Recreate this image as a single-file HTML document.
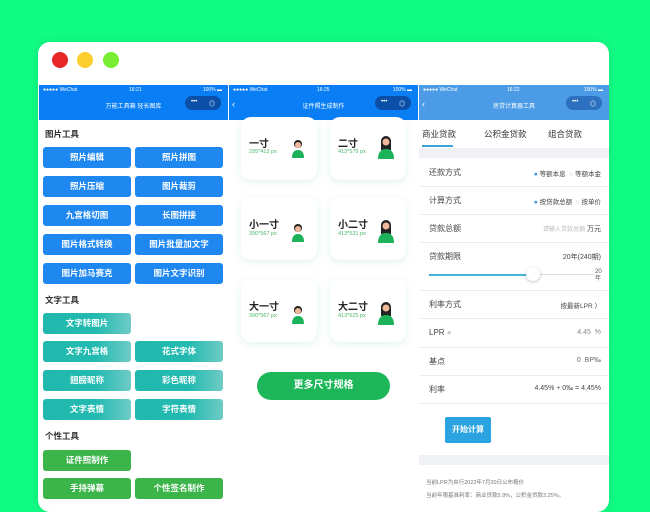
<!DOCTYPE html>
<html><head><meta charset="utf-8"><style>
*{margin:0;padding:0;box-sizing:border-box}
body{width:650px;height:500px;background:#10fb84;position:relative;overflow:hidden;font-family:"Liberation Sans","Noto Sans CJK SC",sans-serif}
.win{position:absolute;left:38px;top:42px;width:571px;height:470px;background:#fff;border-radius:12px;overflow:hidden;box-shadow:0 0 8px rgba(0,0,0,.1)}
.dot{position:absolute;top:52px;width:16px;height:16px;border-radius:50%}
.p{position:absolute;top:85px;width:189px;height:415px;background:#fff;overflow:hidden}
.hd{position:absolute;left:0;top:0;width:100%;height:35px;background:#0a7ef5;color:#fff}
.sb{position:absolute;top:2px;font-size:5px}
.tt{position:absolute;top:16px;width:100%;text-align:center;font-size:6px}
.cap{position:absolute;right:7px;top:11px;width:36px;height:14px;border-radius:7px;background:#0b4fa8;font-size:6px;color:#fff}
.a{position:absolute}
.b{position:absolute;width:88px;height:21px;border-radius:3px;color:#fff;font-size:8.5px;font-weight:bold;text-align:center;line-height:21px}
.bl{background:#1e87f0}
.te{background:linear-gradient(90deg,#21b9ae,#22bab0 60%,#6fcbc6)}
.gr{background:#3bb44a}
.sec{position:absolute;left:6px;font-size:8.5px;font-weight:bold;color:#333}
.card{position:absolute;width:76px;height:63px;background:#fff;border-radius:10px;box-shadow:0 2px 8px rgba(40,180,120,.15)}
.card .n{position:absolute;left:8px;top:19px;font-size:10px;font-weight:bold;color:#222}
.card .s{position:absolute;left:8px;top:34px;font-size:5.5px;color:#4cb86a}
.lab{position:absolute;left:10px;font-size:8px;color:#444}
.val{position:absolute;right:8px;font-size:7px;color:#444}
.ln{position:absolute;left:0;width:100%;height:1px;background:#eee}
</style></head><body>
<div class="win"></div>
<div class="dot" style="left:52px;background:#e8262a"></div>
<div class="dot" style="left:77px;background:#fdcf2e"></div>
<div class="dot" style="left:103px;background:#77ee32"></div>

<!-- panel 1 -->
<div class="p" style="left:39px">
 <div class="hd"><span class="sb" style="left:4px">●●●●● WeChat</span><span class="sb" style="left:90px">16:21</span><span class="sb" style="right:6px">100% ▬</span>
 <div class="tt">万能工具箱 轻长图库</div><div class="cap"><span class="a" style="left:6px;top:3px">•••</span><span class="a" style="left:24px;top:3px">◎</span></div></div>
 <div class="sec" style="top:43px">图片工具</div>
 <div class="b bl" style="left:4px;top:62px">照片编辑</div><div class="b bl" style="left:96px;top:62px">照片拼图</div>
 <div class="b bl" style="left:4px;top:91px">照片压缩</div><div class="b bl" style="left:96px;top:91px">图片裁剪</div>
 <div class="b bl" style="left:4px;top:120px">九宫格切图</div><div class="b bl" style="left:96px;top:120px">长图拼接</div>
 <div class="b bl" style="left:4px;top:149px">图片格式转换</div><div class="b bl" style="left:96px;top:149px">图片批量加文字</div>
 <div class="b bl" style="left:4px;top:178px">图片加马赛克</div><div class="b bl" style="left:96px;top:178px">图片文字识别</div>
 <div class="sec" style="top:209px">文字工具</div>
 <div class="b te" style="left:4px;top:228px">文字转图片</div>
 <div class="b te" style="left:4px;top:256px">文字九宫格</div><div class="b te" style="left:96px;top:256px">花式字体</div>
 <div class="b te" style="left:4px;top:285px">翅膀昵称</div><div class="b te" style="left:96px;top:285px">彩色昵称</div>
 <div class="b te" style="left:4px;top:314px">文字表情</div><div class="b te" style="left:96px;top:314px">字符表情</div>
 <div class="sec" style="top:345px">个性工具</div>
 <div class="b gr" style="left:4px;top:365px">证件照制作</div>
 <div class="b gr" style="left:4px;top:393px">手持弹幕</div><div class="b gr" style="left:96px;top:393px">个性签名制作</div>
</div>

<!-- panel 2 -->
<div class="p" style="left:229px">
 <div class="hd"><span class="sb" style="left:4px">●●●●● WeChat</span><span class="sb" style="left:88px">16:25</span><span class="sb" style="right:6px">100% ▬</span>
 <span class="a" style="left:3px;top:14px;font-size:9px">‹</span>
 <div class="tt">证件照生成制作</div><div class="cap"><span class="a" style="left:6px;top:3px">•••</span><span class="a" style="left:24px;top:3px">◎</span></div></div>
 <div class="card" style="left:12px;top:32px;height:63px"><div class="n" style="top:18px">一寸</div><div class="s" style="top:32px">295*413 px</div></div>
 <div class="card" style="left:101px;top:32px;height:63px"><div class="n" style="top:18px">二寸</div><div class="s" style="top:32px">413*579 px</div></div>
 <div class="card" style="left:12px;top:112px"><div class="n">小一寸</div><div class="s">390*567 px</div></div>
 <div class="card" style="left:101px;top:112px"><div class="n">小二寸</div><div class="s">413*531 px</div></div>
 <div class="card" style="left:12px;top:194px"><div class="n">大一寸</div><div class="s">390*567 px</div></div>
 <div class="card" style="left:101px;top:194px"><div class="n">大二寸</div><div class="s">413*625 px</div></div>
 <svg class="a" style="left:62px;top:53px" width="14" height="20"><circle cx="7" cy="6" r="4" fill="#222"/><circle cx="7" cy="7" r="3" fill="#f1b89a"/><path d="M1 20 Q1 12 7 12 Q13 12 13 20Z" fill="#1cb25a"/></svg>
 <svg class="a" style="left:148px;top:48px" width="18" height="26"><circle cx="9" cy="8" r="5" fill="#222"/><rect x="4" y="8" width="10" height="9" fill="#222"/><circle cx="9" cy="9" r="3.5" fill="#f1b89a"/><path d="M1 26 Q1 16 9 16 Q17 16 17 26Z" fill="#1cb25a"/></svg>
 <svg class="a" style="left:62px;top:137px" width="14" height="20"><circle cx="7" cy="6" r="4" fill="#222"/><circle cx="7" cy="7" r="3" fill="#f1b89a"/><path d="M1 20 Q1 12 7 12 Q13 12 13 20Z" fill="#1cb25a"/></svg>
 <svg class="a" style="left:148px;top:132px" width="18" height="26"><circle cx="9" cy="8" r="5" fill="#222"/><rect x="4" y="8" width="10" height="9" fill="#222"/><circle cx="9" cy="9" r="3.5" fill="#f1b89a"/><path d="M1 26 Q1 16 9 16 Q17 16 17 26Z" fill="#1cb25a"/></svg>
 <svg class="a" style="left:62px;top:219px" width="14" height="20"><circle cx="7" cy="6" r="4" fill="#222"/><circle cx="7" cy="7" r="3" fill="#f1b89a"/><path d="M1 20 Q1 12 7 12 Q13 12 13 20Z" fill="#1cb25a"/></svg>
 <svg class="a" style="left:148px;top:214px" width="18" height="26"><circle cx="9" cy="8" r="5" fill="#222"/><rect x="4" y="8" width="10" height="9" fill="#222"/><circle cx="9" cy="9" r="3.5" fill="#f1b89a"/><path d="M1 26 Q1 16 9 16 Q17 16 17 26Z" fill="#1cb25a"/></svg>
 <div class="a" style="left:28px;top:287px;width:133px;height:28px;border-radius:14px;background:#1db75a;color:#fff;font-size:10px;font-weight:bold;text-align:center;line-height:28px">更多尺寸规格</div>
</div>

<!-- panel 3 -->
<div class="p" style="left:419px;width:190px">
 <div class="hd" style="background:#4c9be6"><span class="sb" style="left:4px">●●●●● WeChat</span><span class="sb" style="left:88px">16:22</span><span class="sb" style="right:6px">100% ▬</span>
 <span class="a" style="left:3px;top:14px;font-size:9px">‹</span>
 <div class="tt">房贷计算器工具</div><div class="cap" style="background:#2e70c0"><span class="a" style="left:6px;top:3px">•••</span><span class="a" style="left:24px;top:3px">◎</span></div></div>
 <span class="a" style="left:3px;top:43px;font-size:8.5px;color:#333">商业贷款</span>
 <span class="a" style="left:65px;top:43px;font-size:8.5px;color:#333">公积金贷款</span>
 <span class="a" style="left:129px;top:43px;font-size:8.5px;color:#333">组合贷款</span>
 <div class="a" style="left:3px;top:60px;width:31px;height:2px;background:#3aa3d8"></div>
 <div class="a" style="left:0;top:63px;width:100%;height:10px;background:#f0f1f4"></div>
 <div class="lab" style="top:82px">还款方式</div>
 <div class="val" style="top:83px;font-size:6.5px"><span style="color:#2b8de0">●</span> 等额本息 &nbsp;<span style="color:#aac">○</span> 等额本金</div>
 <div class="ln" style="top:101px"></div>
 <div class="lab" style="top:110px">计算方式</div>
 <div class="val" style="top:111px;font-size:6.5px"><span style="color:#2b8de0">●</span> 按贷款总额 &nbsp;<span style="color:#aac">○</span> 按单价</div>
 <div class="ln" style="top:129px"></div>
 <div class="lab" style="top:138px">贷款总额</div>
 <div class="val" style="top:139px"><span style="color:#bbb;font-size:6px">请输入贷款总额</span> 万元</div>
 <div class="ln" style="top:157px"></div>
 <div class="lab" style="top:166px">贷款期限</div>
 <div class="val" style="top:167px">20年(240期)</div>
 <div class="a" style="left:10px;top:189px;width:105px;height:2px;background:#47b4d6"></div>
 <div class="a" style="left:115px;top:189px;width:60px;height:1px;background:#ddd"></div>
 <div class="a" style="left:107px;top:182px;width:14px;height:14px;border-radius:50%;background:#fff;box-shadow:0 1px 3px rgba(0,0,0,.25)"></div>
 <div class="a" style="left:176px;top:184px;font-size:6px;color:#555;line-height:7px">20<br>年</div>
 <div class="ln" style="top:205px"></div>
 <div class="lab" style="top:214px">利率方式</div>
 <div class="val" style="top:215px;font-size:6.5px">按最新LPR 〉</div>
 <div class="ln" style="top:233px"></div>
 <div class="lab" style="top:243px">LPR <span style="color:#ccc">●</span></div>
 <div class="val" style="top:244px;color:#888">4.45 &nbsp;%</div>
 <div class="ln" style="top:262px"></div>
 <div class="lab" style="top:271px">基点</div>
 <div class="val" style="top:272px;color:#666">0 &nbsp;BP‰</div>
 <div class="ln" style="top:290px"></div>
 <div class="lab" style="top:299px">利率</div>
 <div class="val" style="top:300px">4.45% + 0‰ = 4.45%</div>
 <div class="ln" style="top:318px"></div>
 <div class="a" style="left:26px;top:332px;width:46px;height:26px;border-radius:2px;background:#2aa3e0;color:#fff;font-size:8px;font-weight:bold;text-align:center;line-height:26px">开始计算</div>
 <div class="a" style="left:0;top:370px;width:100%;height:10px;background:#f0f1f4"></div>
 <div class="a" style="left:7px;top:393px;font-size:5.5px;color:#777">当前LPR为央行2022年7月20日公布报价</div>
 <div class="a" style="left:7px;top:406px;font-size:5.5px;color:#777">当前年限基准利率：商业贷款5.9%，公积金贷款3.25%。</div>
</div>
</body></html>
